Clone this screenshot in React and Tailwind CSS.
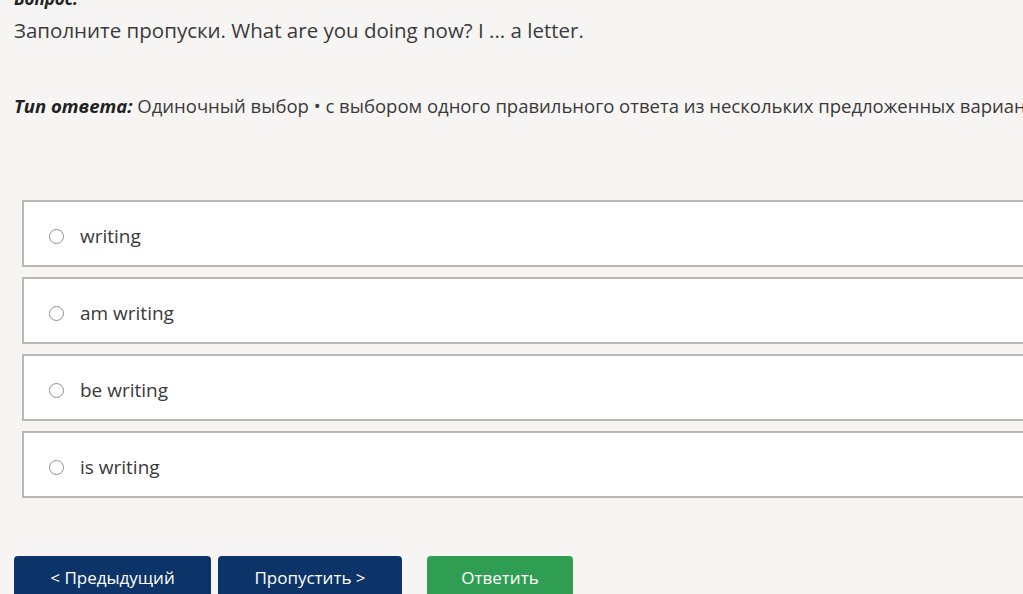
const options = ["writing", "am writing", "be writing", "is writing"];

const Option = ({ label }) => (
  <label className="flex items-center h-[67px] bg-white border-2 border-[#b9b9b9] pl-[25px] pt-[6px] cursor-pointer">
    <span className="w-[15px] h-[15px] rounded-full border-[1.5px] border-[#8f8f8f] bg-white shrink-0"></span>
    <span className="ml-[16px] text-[19px] text-[#3a3a3a]">{label}</span>
  </label>
);

export default function App() {
  return (
    <div
      className="w-[1023px] h-[594px] overflow-hidden bg-[#f6f5f3] text-[#333]"
      style={{ fontFamily: '"Open Sans", "Noto Sans", sans-serif' }}
    >
      <div className="pl-[14px] w-[1200px]">
        <p className="-mt-[12px] h-[22px] text-[17px] font-bold italic leading-[22px] text-[#222]">Вопрос:</p>
        <p className="mt-[6px] text-[20.5px] leading-[28px] text-[#3a3a3a]">
          Заполните пропуски. What are you doing now? I ... a letter.
        </p>
        <p className="mt-[50px] text-[18.5px] leading-[24px] text-[#3a3a3a] whitespace-nowrap">
          <span className="font-bold italic text-[#222]">Тип ответа:</span> Одиночный выбор • с выбором одного правильного ответа из нескольких предложенных вариантов
        </p>

        <div className="mt-[82px] ml-[8px] flex flex-col gap-[10px]">
          {options.map((o) => (
            <Option key={o} label={o} />
          ))}
        </div>

        <div className="mt-[58px] flex items-start">
          <button className="w-[197px] h-[50px] rounded-[4px] bg-[#0c3468] text-white text-[17px] pb-[6px]">
            &lt; Предыдущий
          </button>
          <button className="ml-[7px] w-[184px] h-[50px] rounded-[4px] bg-[#0c3468] text-white text-[17px] pb-[6px]">
            Пропустить &gt;
          </button>
          <button className="ml-[25px] w-[146px] h-[50px] rounded-[4px] bg-[#2f9e52] text-white text-[17px] pb-[6px]">
            Ответить
          </button>
        </div>
      </div>
    </div>
  );
}
